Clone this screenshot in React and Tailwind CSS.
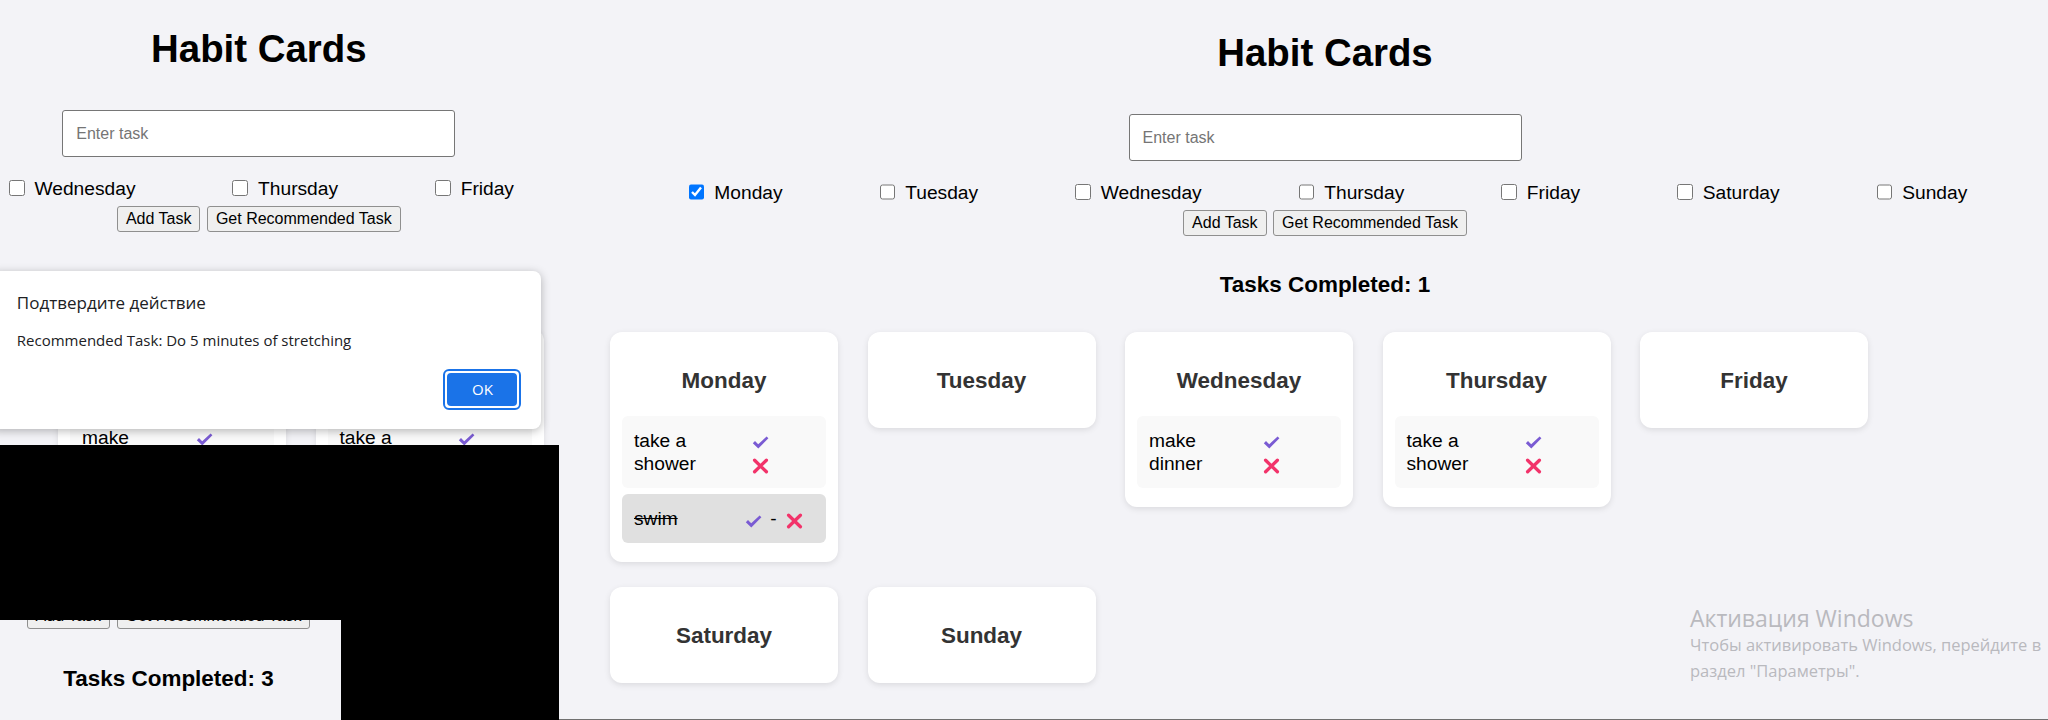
import React from 'react';

const DAYS = ['Monday', 'Tuesday', 'Wednesday', 'Thursday', 'Friday', 'Saturday', 'Sunday'];

// 오른쪽 화면 카드 데이터
const RIGHT_CARDS = [
  { day: 'Monday', tasks: [{ text: 'take a shower', ml: 'ml-[18px]' }, { text: 'swim', done: true, ml: 'ml-[10.6px]' }] },
  { day: 'Tuesday', tasks: [] },
  { day: 'Wednesday', tasks: [{ text: 'make dinner', ml: 'ml-[14px]' }] },
  { day: 'Thursday', tasks: [{ text: 'take a shower', ml: 'ml-[18px]' }] },
  { day: 'Friday', tasks: [] },
  { day: 'Saturday', tasks: [] },
  { day: 'Sunday', tasks: [] },
];

const LEFT_CARDS = [
  { day: 'Wednesday', tasks: [{ text: 'make dinner', ml: 'ml-[14px]' }] },
  { day: 'Thursday', tasks: [{ text: 'take a shower', ml: 'ml-[18px]' }] },
];

const Check = () => (
  <svg width="17" height="13" viewBox="0 0 17 13" className="block shrink-0">
    <path d="M0.8 7.2 L3 5.1 L6.2 8.2 L14.6 0.5 L16.4 2.2 L6.3 12.4 Z" fill="#7a5bd3" />
  </svg>
);

const Cross = () => (
  <svg width="17" height="16" viewBox="0 0 17 16" className="block shrink-0">
    <path d="M2.6 2.2 L14.4 13.8 M14.4 2.2 L2.6 13.8" stroke="#f2336a" strokeWidth="3.3" strokeLinecap="round" />
  </svg>
);

const Task = ({ text, done, ml }) => (
  <div
    className={`flex items-center rounded-[6px] py-[13px] pl-[12px] ${
      done ? 'bg-[#e0e0e0]' : 'bg-[#f9f9f9]'
    }`}
  >
    <span className={`w-[100px] text-[19.2px] leading-[23px] text-black ${done ? 'line-through' : ''}`}>
      {text}
    </span>
    {done ? (
      <div className={`flex h-[23px] items-center ${ml}`}>
        <span className="pt-[5px]"><Check /></span>
        <span className="ml-[8.6px] text-[19.2px] leading-[23px] text-black">-</span>
        <span className="ml-[9.6px] pt-[4px]"><Cross /></span>
      </div>
    ) : (
      <div className={`flex flex-col ${ml}`}>
        <div className="flex h-[23px] items-center pt-[4px]"><Check /></div>
        <div className="flex h-[23px] items-center pt-[4px]"><Cross /></div>
      </div>
    )}
  </div>
);

const Card = ({ day, tasks }) => (
  <div className="w-[228px] rounded-[12px] bg-white px-[12px] pt-[36px] pb-[19px] shadow-[0_2px_6px_rgba(0,0,0,0.1)]">
    <h3 className="text-center text-[22.46px] font-bold leading-[25px] text-[#333]">{day}</h3>
    {tasks.length ? (
      <div className="mt-[23px] flex flex-col gap-[6px]">
        {tasks.map((t, i) => (
          <Task key={i} {...t} />
        ))}
      </div>
    ) : (
      <div className="h-[16px]" />
    )}
  </div>
);

const Buttons = () => (
  <div className="flex gap-[6.5px]">
    <button className="h-[26px] rounded-[3px] border border-[#8f8f8f] bg-[#efefef] px-[8px] text-[16px] leading-[24px] text-black">
      Add Task
    </button>
    <button className="h-[26px] rounded-[3px] border border-[#8f8f8f] bg-[#efefef] px-[8px] text-[16px] leading-[24px] text-black">
      Get Recommended Task
    </button>
  </div>
);

// 상단 입력 영역 (제목, 입력창, 요일 체크박스, 버튼, 완료 수)
const Header = ({ width, pt, count, mondayChecked }) => (
  <div className={`flex flex-col items-center ${width} ${pt}`}>
    <h1 className="text-[38.4px] font-bold leading-[44px] text-black">Habit Cards</h1>
    <input
      type="text"
      placeholder="Enter task"
      className="mt-[39px] h-[47px] w-[393px] rounded-[3px] border border-[#767676] bg-white pl-[13px] text-[16px] outline-none placeholder:text-[#757575]"
    />
    <div className="mt-[21px] ml-[6px] flex w-[1400px] shrink-0 justify-center gap-x-[97px]">
      {DAYS.map((d) => (
        <label key={d} className="flex items-center whitespace-nowrap text-[19.2px] leading-[22px] text-black">
          <input
            type="checkbox"
            defaultChecked={mondayChecked && d === 'Monday'}
            className="relative top-[-1px] h-[15.6px] w-[15.6px]"
          />
          <span className="ml-[10px]">{d}</span>
        </label>
      ))}
    </div>
    <div className="mt-[6px]">
      <Buttons />
    </div>
    <h3 className="mt-[36px] text-[22.46px] font-bold leading-[26px] text-black">Tasks Completed: {count}</h3>
  </div>
);

const Dialog = () => (
  <div className="absolute left-[-10px] top-[271px] h-[158px] w-[551px] rounded-[8px] bg-white pl-[26.8px] shadow-[0_2px_10px_rgba(0,0,0,0.28)] font-['Open_Sans',sans-serif]">
    <div className="mt-[21px] text-[17px] leading-[22px] text-[#202124]">Подтвердите действие</div>
    <div className="mt-[16px] text-[15px] leading-[20px] text-[#202124]">Recommended Task: Do 5 minutes of stretching</div>
    <div className="mt-[19px] flex justify-end pr-[19.6px]">
      <div className="rounded-[6px] border-2 border-[#1a73e8] bg-white p-[2px]">
        <div className="flex h-[33px] w-[70px] items-center justify-center rounded-[4px] bg-[#1a73e8] text-[15px] text-white">
          OK
        </div>
      </div>
    </div>
  </div>
);

export default function App() {
  return (
    <div className="flex h-[720px] w-[2048px] overflow-hidden bg-[#f3f3f7] font-['Liberation_Sans',Arial,sans-serif]">
      {/* 왼쪽 스크린샷 */}
      <div className="flex h-[720px] w-[559px] shrink-0 flex-col">
        <div className="relative h-[445px] shrink-0 overflow-hidden">
          <Header width="w-[517.6px]" pt="pt-[27px]" count={3} mondayChecked={false} />
          <div className="mt-[35px] flex items-start gap-x-[29.5px] pl-[58px]">
            {LEFT_CARDS.map((c) => (
              <Card key={c.day} {...c} />
            ))}
          </div>
          <Dialog />
        </div>
        <div className="h-[175px] shrink-0 bg-black" />
        <div className="flex h-[100px] shrink-0">
          <div className="flex w-[341px] shrink-0 flex-col items-center overflow-hidden pr-[4px]">
            <div className="mt-[-17px]">
              <Buttons />
            </div>
            <h3 className="mt-[37px] text-[22.46px] font-bold leading-[26px] text-black">Tasks Completed: 3</h3>
          </div>
          <div className="flex-1 bg-black" />
        </div>
      </div>

      {/* 오른쪽 메인 화면 */}
      <div className="relative h-[720px] w-[1532px] shrink-0 overflow-hidden border-b border-[#707070]">
        <Header width="w-full" pt="pt-[31px]" count={1} mondayChecked />
        <div className="mt-[34px] flex w-[1400px] flex-wrap items-start gap-x-[29.5px] gap-y-[25px] pl-[51px]">
          {RIGHT_CARDS.map((c) => (
            <Card key={c.day} {...c} />
          ))}
        </div>
        <div className="absolute left-[1131px] top-[603.5px] whitespace-nowrap text-[#b9b9be] font-['Open_Sans',sans-serif]">
          <div className="text-[23px] leading-[28px]">Активация Windows</div>
          <div className="text-[16.5px] leading-[26px]">Чтобы активировать Windows, перейдите в</div>
          <div className="text-[16.5px] leading-[26px]">раздел "Параметры".</div>
        </div>
      </div>
    </div>
  );
}
